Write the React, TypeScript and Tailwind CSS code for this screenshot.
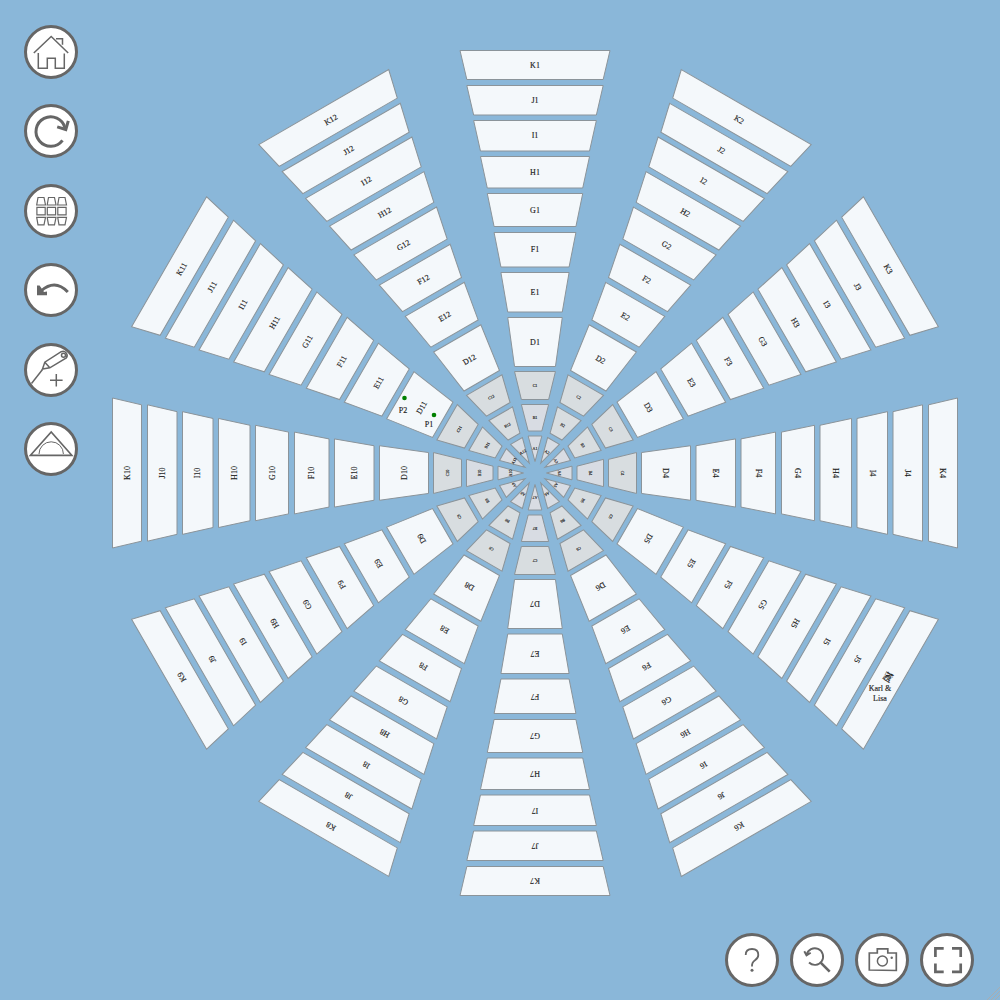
import React from "react";

type Ring = { row: string; outer: number; inner: number; size: number; fill: string };

const WHITE = "#f4f8fb";
const GREY = "#d8dde0";
const LILAC = "#d8dce3";

// Distances are measured from the centre of the wheel.
const RINGS: Ring[] = [
  { row: "K", outer: 422.5, inner: 393.5, size: 8, fill: WHITE },
  { row: "J", outer: 387.5, inner: 358, size: 8, fill: WHITE },
  { row: "I", outer: 352.5, inner: 322, size: 8, fill: WHITE },
  { row: "H", outer: 316.5, inner: 285, size: 8, fill: WHITE },
  { row: "G", outer: 279.5, inner: 246.5, size: 8, fill: WHITE },
  { row: "F", outer: 240.5, inner: 206, size: 8, fill: WHITE },
  { row: "E", outer: 200.5, inner: 161, size: 8, fill: WHITE },
  { row: "D", outer: 155.5, inner: 106.5, size: 8, fill: WHITE },
  { row: "C", outer: 101.5, inner: 73.5, size: 4, fill: GREY },
  { row: "B", outer: 68.5, inner: 42, size: 4, fill: LILAC },
  { row: "A", outer: 37, inner: 11.5, size: 4, fill: LILAC },
];
const HALF = 75;
const SECTORS = Array.from({ length: 12 }, (_, i) => i + 1);

function fillFor(ring: Ring, sector: number) {
  if (ring.row === "B" && sector % 3 !== 1) return GREY;
  return ring.fill;
}

function Wheel() {
  return (
    <svg viewBox="-535 -473 1000 1000" className="block h-auto w-full" role="img" aria-label="Seating chart">
      <g fontFamily="'Liberation Serif', serif" textAnchor="middle" fill="#1c1c1c">
        {SECTORS.map((n) => (
          <g key={n} transform={`rotate(${(n - 1) * 30})`}>
            {RINGS.map((r, i) => {
              const a = (HALF * (11 - i)) / 11;
              const b = (HALF * (10 - i)) / 11;
              const label = r.row + n;
              const mid = -(r.outer + r.inner) / 2;
              return (
                <g key={label}>
                  <polygon
                    points={`${-a},${-r.outer} ${a},${-r.outer} ${b},${-r.inner} ${-b},${-r.inner}`}
                    fill={fillFor(r, n)}
                    stroke="#8b949a"
                    strokeWidth="1"
                  />
                  <text y={mid + r.size / 3} fontSize={r.size} stroke="#1c1c1c" strokeWidth="0.15">
                    {label}
                  </text>
                </g>
              );
            })}
          </g>
        ))}
        {/* Guest names collapsed onto the K5 label */}
        <g transform="translate(353 204) rotate(120)" fontSize="5" fontWeight="bold">
          <text y="-1">Karl</text>
          <text y="2">&amp;</text>
          <text y="4">Lisa</text>
        </g>
        <g fontSize="8" stroke="#1c1c1c" strokeWidth="0.15">
          <circle cx="-130.5" cy="-75" r="2.3" fill="#008000" stroke="none" />
          <circle cx="-101" cy="-58" r="2.3" fill="#008000" stroke="none" />
          <text x="-132" y="-60">P2</text>
          <text x="-106" y="-46">P1</text>
          <text x="345" y="218">Karl &amp;</text>
          <text x="345" y="228">Lisa</text>
        </g>
      </g>
    </svg>
  );
}

function Tool({ label, children }: { label: string; children: React.ReactNode }) {
  return (
    <button
      type="button"
      aria-label={label}
      className="flex size-[54px] shrink-0 items-center justify-center rounded-full border-3 border-[#666] bg-white"
    >
      <svg viewBox="0 0 54 54" className="size-[54px] shrink-0" fill="none" stroke="#666" strokeWidth="1.5">
        {children}
      </svg>
    </button>
  );
}

export default function App() {
  return (
    <main className="relative min-h-screen overflow-hidden bg-[#8ab7d9]">
      <Wheel />
      <nav aria-label="Editing tools" className="absolute top-[25px] left-6 flex h-[451px] flex-col justify-between">
        <Tool label="Home">
          <path d="M9.8 28 27.2 11.5 44.2 28M32 13.7h6.5v6M14.3 28v15.3h9V33.3h8v10h9V28.5" />
        </Tool>
        <Tool label="Rotate">
          <path d="M38.5 36.3A14.7 14.7 0 1 1 41 24" strokeWidth="3" />
          <path d="M44.3 16.8 41.8 25.5l-8.6-2.6" strokeWidth="3" />
        </Tool>
        <Tool label="Seats">
          <path
            d="M14 13.5h6l1.5 7.5h-8.8zM24.5 13.5h6l1.5 7.5h-8.8zM35 13.5h6l1.5 7.5h-8.8zM12.9 23.4h8.3v7.5h-8.3zM23.3 23.4h8.3v7.5h-8.3zM33.8 23.4h8.3v7.5h-8.3zM12.7 33.3h8.8l-1.5 7.5h-6zM23.2 33.3h8.8l-1.5 7.5h-6zM33.7 33.3h8.8l-1.5 7.5h-6z"
            strokeWidth="1.2"
          />
        </Tool>
        <Tool label="Undo">
          <path d="M43.8 29Q31 15.500 17 28" strokeWidth="3" />
          <path d="M13 22.400h2.600L18 26l2 3 3-.5v3.700H13z" fill="#666" stroke="none" />
        </Tool>
        <Tool label="Add point">
          <path d="M7.500 40.500 18.500 26.500" />
          <path d="M18.500 26 20.800 19.200 37.200 8.700A4.200 4.200 0 0 1 42.300 15L25.800 24.800zM20.800 19.200l5 5.600M26 37.300h12.600M32.300 31v12.600" />
          <circle cx="39.500" cy="12.200" r="2" />
        </Tool>
        <Tool label="Measure angle">
          <path d="M6.500 33.300 27.200 10l20.600 23.300z" strokeWidth="1.700" />
          <path d="M15 32a12.200 12.200 0 0 1 24.400 0" strokeWidth="1" />
        </Tool>
      </nav>
      <nav aria-label="View tools" className="absolute right-[26px] bottom-[13px] flex gap-[11px]">
        <Tool label="Help">
          <path d="M20.700 22q0-6 6.300-6t6.300 6q0 3-3.300 5.300t-3 6.200" strokeWidth="1.800" />
          <circle cx="27" cy="37.300" r="1.500" fill="#666" stroke="none" />
        </Tool>
        <Tool label="Reset zoom">
          <path d="M16.700 21.800A8.300 8.300 0 1 1 19 29.500M14.300 18.300l2.200 4 4.200-2.600" strokeWidth="1.900" />
          <path d="m30.700 29.700 9 9" strokeWidth="2.600" />
        </Tool>
        <Tool label="Take a picture">
          <path d="M14.300 20h8v-4.200h10.500V20h8.500v17.500l-27-.5z" strokeWidth="1.700" />
          <circle cx="27.400" cy="28" r="5" />
          <circle cx="36.700" cy="24.700" r="1.200" fill="#666" stroke="none" />
        </Tool>
        <Tool label="Full screen">
          <path d="M23.700 15.400h-8.300V24M32 15.400h8.700V24M23.700 38.800h-8.300v-8.300M32 38.800h8.700v-8.300" strokeWidth="2.700" />
        </Tool>
      </nav>
      <svg viewBox="0 0 14 14" className="absolute right-0 bottom-0 size-[14px]" stroke="#a9adb0" aria-hidden="true">
        <path d="M1 14 14 1M5 14l9-9M9 14l5-5" />
      </svg>
    </main>
  );
}
